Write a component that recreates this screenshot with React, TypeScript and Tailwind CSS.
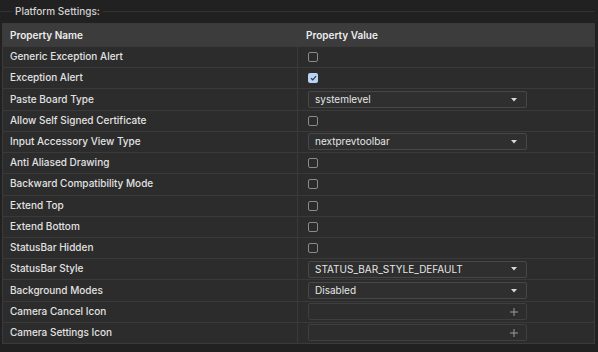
import React from "react";

type Row = {
  name: string;
  kind: "check" | "select" | "image";
  checked?: boolean;
  value?: string;
};

const rows: Row[] = [
  { name: "Generic Exception Alert", kind: "check" },
  { name: "Exception Alert", kind: "check", checked: true },
  { name: "Paste Board Type", kind: "select", value: "systemlevel" },
  { name: "Allow Self Signed Certificate", kind: "check" },
  { name: "Input Accessory View Type", kind: "select", value: "nextprevtoolbar" },
  { name: "Anti Aliased Drawing", kind: "check" },
  { name: "Backward Compatibility Mode", kind: "check" },
  { name: "Extend Top", kind: "check" },
  { name: "Extend Bottom", kind: "check" },
  { name: "StatusBar Hidden", kind: "check" },
  { name: "StatusBar Style", kind: "select", value: "STATUS_BAR_STYLE_DEFAULT" },
  { name: "Background Modes", kind: "select", value: "Disabled" },
  { name: "Camera Cancel Icon", kind: "image" },
  { name: "Camera Settings Icon", kind: "image" },
];

function Checkbox({ checked }: { checked?: boolean }) {
  if (checked) {
    return (
      <div className="w-[10px] h-[10px] rounded-[2px] bg-[#b9d4f2] flex items-center justify-center">
        <svg width="7" height="6" viewBox="0 0 7 6">
          <path d="M1 3.2 L2.8 4.8 L6 1.2" fill="none" stroke="#2a3a55" strokeWidth="1.2" />
        </svg>
      </div>
    );
  }
  return <div className="w-[10px] h-[10px] rounded-[2px] border border-[#8a8a8a] bg-[#2b2b2b]" />;
}

function Select({ value }: { value: string }) {
  return (
    <div className="w-[219px] h-[17px] rounded-[2px] border border-[#474747] bg-[#2f2f2f] flex items-center justify-between pl-[6px] pr-[9px]">
      <span className="text-[10px] text-[#e6e6e6]">{value}</span>
      <svg width="6" height="4" viewBox="0 0 6 4">
        <path d="M0 0 H6 L3 3.5 Z" fill="#d8d8d8" />
      </svg>
    </div>
  );
}

function ImageField() {
  return (
    <div className="w-[219px] h-[17px] rounded-[2px] border border-[#3f3f3f] bg-[#2d2d2d] flex items-center justify-end pr-[8px]">
      <svg width="8" height="8" viewBox="0 0 8 8">
        <path d="M4 0 V8 M0 4 H8" stroke="#9c9c9c" strokeWidth="1" />
      </svg>
    </div>
  );
}

export default function App() {
  return (
    <div className="w-[598px] h-[352px] bg-[#212121] font-['Inter','Liberation_Sans',sans-serif] pt-[4px] overflow-hidden">
      <div className="flex items-center h-[14px] pr-[4px]">
        <div className="w-[12px] h-px bg-[#333333]" />
        <span className="px-[3px] text-[10px] font-medium text-[#d2d2d2]">Platform Settings:</span>
        <div className="flex-1 h-px bg-[#333333]" />
      </div>
      <div className="mt-[5px] ml-[2px] w-[593px] border border-[#3a3a3a] bg-[#2c2c2c]">
        <div className="flex h-[22px] bg-[#3c3c3c] items-center text-[10px] font-semibold text-[#ececec]">
          <div className="w-[295px] pl-[7px]">Property Name</div>
          <div className="flex-1 pl-[8px]">Property Value</div>
        </div>
        {rows.map((r) => (
          <div key={r.name} className="flex h-[21.23px] border-t border-[#3a3a3a] items-center">
            <div className="w-[295px] h-full flex items-center pl-[7px] pb-px border-r border-[#3a3a3a] text-[10px] font-medium text-[#e2e2e2]">
              {r.name}
            </div>
            <div className="flex-1 pl-[10px] flex items-center">
              {r.kind === "check" && <Checkbox checked={r.checked} />}
              {r.kind === "select" && <Select value={r.value || ""} />}
              {r.kind === "image" && <ImageField />}
            </div>
          </div>
        ))}
      </div>
    </div>
  );
}
